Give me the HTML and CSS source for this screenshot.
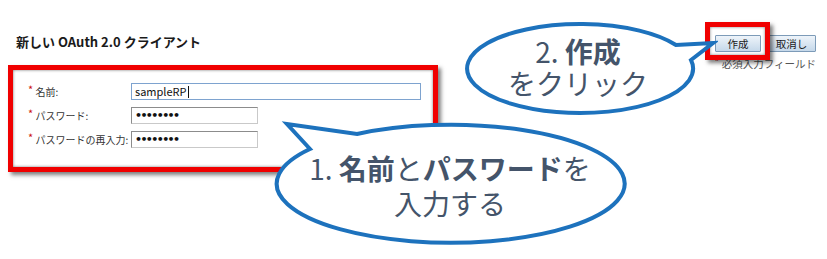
FILE: index.html
```html
<!DOCTYPE html>
<html lang="ja">
<head>
  <meta charset="UTF-8">
  <meta name="viewport" content="width=device-width, initial-scale=1.0">
  <title>新しい OAuth 2.0 クライアント</title>
  <link rel="stylesheet" href="styles.css">
</head>
<body>
  <div class="page">
    <div class="top">
      <h1 class="title">新しい OAuth 2.0 クライアント</h1>
      <div class="actions">
        <div class="buttons">
          <button class="btn">作成</button>
          <button class="btn btn-cancel">取消し</button>
        </div>
        <div class="required"><span class="star">*</span> 必須入力フィールド</div>
      </div>
    </div>

    <!-- form fields, highlighted with the red frame -->
    <div class="form-box">
      <label class="label"><span class="star">*</span> 名前:</label>
      <div class="field field-wide field-focus">sampleRP<span class="caret"></span></div>

      <label class="label"><span class="star">*</span> パスワード:</label>
      <div class="field field-pass">••••••••</div>

      <label class="label"><span class="star">*</span> パスワードの再入力:</label>
      <div class="field field-pass">••••••••</div>
    </div>

    <!-- red frame round the create button -->
    <div class="highlight-create"></div>

    <!-- callout 2 -->
    <div class="callout callout-create">
      <svg width="256" height="100" viewBox="0 0 256 100">
        <path d="M 229 41 A 113 44.5 0 1 1 214 26 L 251 24 Z" />
      </svg>
      <div class="callout-text">
        <div>2. <b>作成</b></div>
        <div>をクリック</div>
      </div>
    </div>

    <!-- callout 1 -->
    <div class="callout callout-form">
      <svg width="360" height="132" viewBox="0 0 360 132">
        <path d="M 87 16 A 174 59 0 1 1 40 31 L 17 6 Z" />
      </svg>
      <div class="callout-text">
        <div>1. <b>名前</b>と<b>パスワード</b>を</div>
        <div>入力する</div>
      </div>
    </div>
  </div>
</body>
</html>
```

FILE: styles.css
```css
body {
  margin: 0;
  padding: 0;
  background-color: #fff;
  color: #222;
  font-family: "Noto Sans CJK JP", "Noto Sans", sans-serif;
}
.page {
  position: relative;
  width: 827px;
  height: 259px;
  overflow: hidden;
}
.top {
  display: flex;
  justify-content: space-between;
  align-items: flex-start;
  height: 65px;
  padding: 34px 11px 0 16px;
  box-sizing: border-box;
}
.title {
  margin: 0;
  font-size: 13px;
  line-height: 16px;
  font-weight: bold;
  color: #1a1a1a;
}
.actions {
  display: flex;
  flex-direction: column;
  align-items: flex-end;
  margin-top: 1px;
}
.buttons {
  display: flex;
  gap: 6px;
}
.btn {
  width: 46px;
  height: 17px;
  padding: 0;
  font-family: inherit;
  font-size: 10.5px;
  line-height: 15px;
  color: #1a1a1a;
  background: linear-gradient(#eef4fa, #c5d8ea);
  border: 1px solid #7d9bb8;
  border-radius: 1px;
}
.btn-cancel {
  width: 49px;
}
.required {
  margin-top: 5px;
  font-size: 10.5px;
  line-height: 13px;
  color: #555;
}
.star {
  color: #cc1111;
  font-size: 11px;
  position: relative;
  top: -2px;
}
/* form area */
.form-box {
  display: grid;
  grid-template-columns: 103px auto;
  align-content: start;
  align-items: center;
  justify-items: start;
  row-gap: 7px;
  width: 430px;
  height: 107px;
  margin-left: 8px;
  padding: 13px 0 0 15px;
  box-sizing: border-box;
  border: 5px solid #f00000;
  box-shadow: 3px 3px 4px rgba(0, 0, 0, 0.5), inset 0 0 3px rgba(0, 0, 0, 0.55);
}
.label {
  font-size: 10px;
  line-height: 17px;
  color: #333;
  white-space: nowrap;
}
.field {
  box-sizing: border-box;
  width: 127px;
  height: 17px;
  padding: 0 3px;
  font-size: 11px;
  line-height: 15px;
  color: #111;
  background: #fff;
  border: 1px solid;
  border-color: #8c8c8c #c9c9c9 #c9c9c9 #8c8c8c;
}
.field-wide {
  width: 290px;
}
.field-focus {
  border-color: #7ea3cf;
}
.field-pass {
  font-size: 11px;
  letter-spacing: -1.6px;
  font-family: "DejaVu Sans", sans-serif;
  font-weight: bold;
}
.caret {
  display: inline-block;
  width: 1px;
  height: 12px;
  margin-left: 1px;
  vertical-align: -2px;
  background: #111;
}
/* overlays */
.highlight-create {
  position: absolute;
  left: 705px;
  top: 22px;
  width: 65px;
  height: 38px;
  box-sizing: border-box;
  border: 5px solid #f00000;
  box-shadow: 3px 3px 4px rgba(0, 0, 0, 0.5), inset 0 0 3px rgba(0, 0, 0, 0.5);
}
.callout {
  position: absolute;
}
.callout svg {
  display: block;
}
.callout path {
  fill: #fff;
  stroke: #1d72bd;
  stroke-width: 4;
  stroke-linejoin: miter;
}
.callout-text {
  position: absolute;
  display: flex;
  flex-direction: column;
  align-items: center;
  font-size: 28px;
  color: #44546a;
  white-space: nowrap;
}
.callout-text b {
  font-weight: bold;
}
.callout-create {
  left: 462px;
  top: 19px;
}
.callout-create .callout-text {
  left: 0;
  width: 232px;
  top: 16px;
  line-height: 32px;
}
.callout-form {
  left: 270px;
  top: 118px;
}
.callout-form .callout-text {
  left: 0;
  width: 360px;
  top: 33px;
  line-height: 35px;
}
```
